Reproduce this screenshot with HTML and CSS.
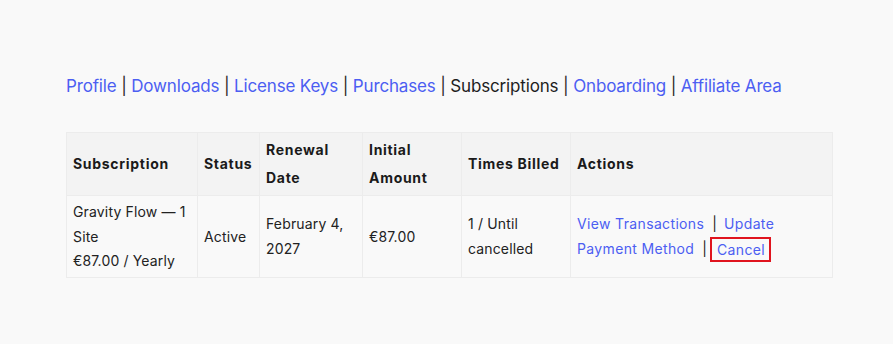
FILE: index.html
```html
<!DOCTYPE html>
<html>
<head>
<meta charset="utf-8">
<link rel="stylesheet" href="styles.css">
</head>
<body>
<div class="page">
  <nav class="nav">
    <a href="#">Profile</a> <span class="sep">|</span> <a href="#">Downloads</a> <span class="sep">|</span> <a href="#">License Keys</a> <span class="sep">|</span> <a href="#">Purchases</a> <span class="sep">|</span> <span class="current">Subscriptions</span> <span class="sep">|</span> <a href="#">Onboarding</a> <span class="sep">|</span> <a href="#">Affiliate Area</a>
  </nav>
  <table class="subs">
    <colgroup>
      <col class="c1"><col class="c2"><col class="c3"><col class="c4"><col class="c5"><col class="c6">
    </colgroup>
    <thead>
      <tr>
        <th>Subscription</th>
        <th>Status</th>
        <th>Renewal Date</th>
        <th>Initial Amount</th>
        <th>Times Billed</th>
        <th>Actions</th>
      </tr>
    </thead>
    <tbody>
      <tr>
        <td>Gravity Flow — 1 Site<br>€87.00 / Yearly</td>
        <td>Active</td>
        <td>February 4, 2027</td>
        <td>€87.00</td>
        <td>1 / Until cancelled</td>
        <td class="actions"><a href="#">View Transactions</a><span class="asep">|</span><a href="#">Update Payment Method</a><span class="asep last">|</span><a href="#" class="cancel">Cancel</a></td>
      </tr>
    </tbody>
  </table>
</div>
</body>
</html>
```
FILE: styles.css
```css
html, body {
  margin: 0;
  padding: 0;
  background: #f9f9f9;
}
.page {
  padding: 73px 0 0 66px;
  font-family: Inter, "Noto Sans", sans-serif;
}
.nav {
  font-size: 17px;
  letter-spacing: -0.16px;
  color: #1e1e1e;
  line-height: 26px;
  margin-bottom: 33px;
  white-space: nowrap;
}
.nav a {
  color: #4c5ef2;
  text-decoration: none;
}
.nav .sep {
  color: #2e2a28;
}
.subs {
  border-collapse: collapse;
  table-layout: fixed;
  width: 766px;
  font-size: 14px;
  color: #222;
}
.c1 { width: 131px; }
.c2 { width: 62px; }
.c3 { width: 103px; }
.c4 { width: 99px; }
.c5 { width: 109px; }
.c6 { width: 262px; }
.subs th, .subs td {
  border: 1px solid #ececec;
  text-align: left;
  vertical-align: middle;
  padding: 3px 6px;
}
.subs th {
  background: #f3f3f3;
  font-weight: 700;
  letter-spacing: 0.7px;
  line-height: 28px;
  height: 56px;
  color: #1a1a1a;
}
.subs td {
  background: #f9f9f9;
  line-height: 24.6px;
  height: 74px;
  padding: 4px 6px 3px;
  letter-spacing: 0.15px;
}
.subs a {
  color: #4c5ef2;
  text-decoration: none;
}
.actions a {
  letter-spacing: 0.35px;
}
.asep {
  margin: 0 7px 0 8px;
}
.asep.last {
  margin: 0 3px 0 8px;
}
.subs a.cancel {
  display: inline-block;
  border: 2px solid #e0141e;
  padding: 0 4px 0 5px;
  line-height: 21px;
  vertical-align: -1px;
}
```
